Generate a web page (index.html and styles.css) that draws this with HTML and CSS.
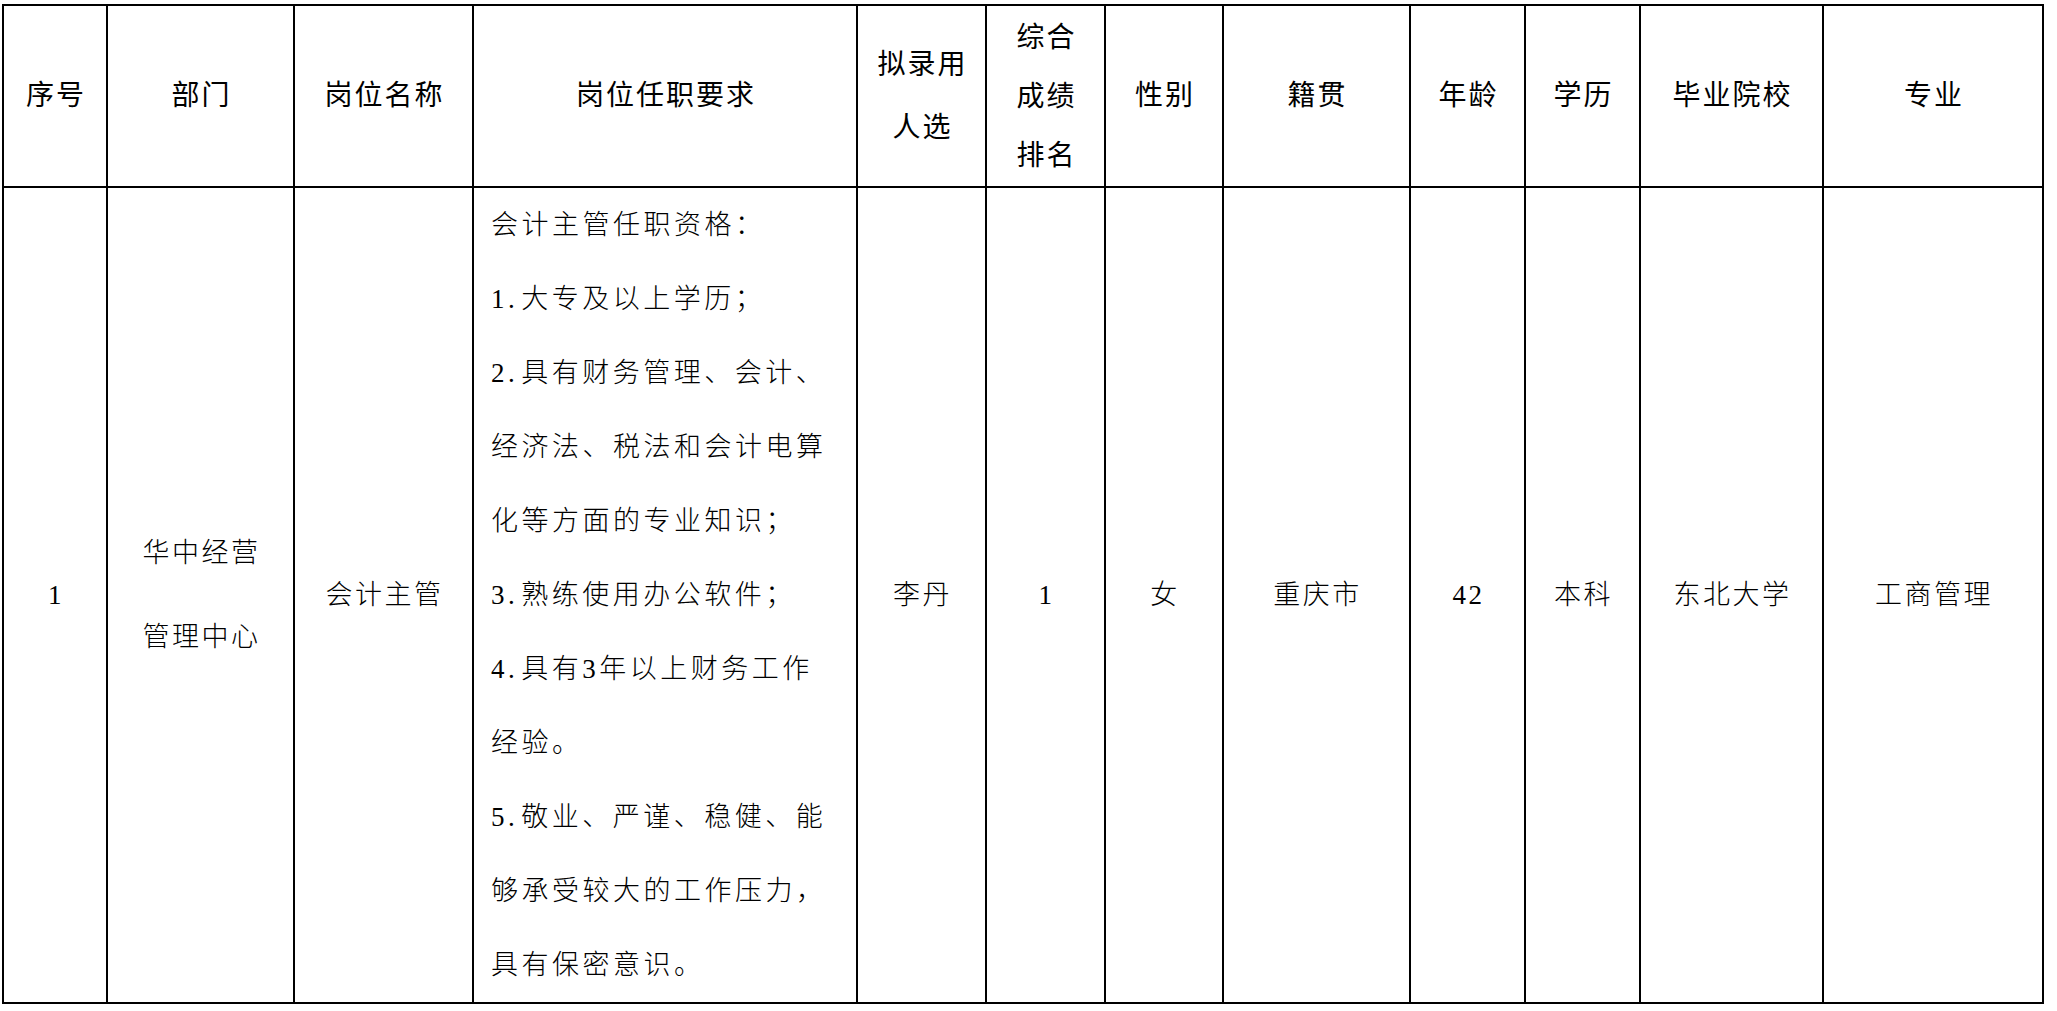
FILE: index.html
```html
<!DOCTYPE html>
<html lang="zh-CN">
<head>
<meta charset="utf-8">
<title>拟录用人选公示</title>
<link rel="stylesheet" href="styles.css">
</head>
<body>
<table class="grid">
  <colgroup>
    <col class="c-no">
    <col class="c-dept">
    <col class="c-title">
    <col class="c-req">
    <col class="c-pick">
    <col class="c-rank">
    <col class="c-sex">
    <col class="c-origin">
    <col class="c-age">
    <col class="c-edu">
    <col class="c-school">
    <col class="c-major">
  </colgroup>
  <thead>
    <tr class="head">
      <th>序号</th>
      <th>部门</th>
      <th>岗位名称</th>
      <th>岗位任职要求</th>
      <th class="two"><div>拟录用</div><div>人选</div></th>
      <th class="three"><div>综合</div><div>成绩</div><div>排名</div></th>
      <th>性别</th>
      <th>籍贯</th>
      <th>年龄</th>
      <th>学历</th>
      <th>毕业院校</th>
      <th>专业</th>
    </tr>
  </thead>
  <tbody>
    <tr class="row">
      <td>1</td>
      <td class="dept"><div>华中经营</div><div>管理中心</div></td>
      <td>会计主管</td>
      <td class="req">
        <div>会计主管任职资格：</div>
        <div><span class="num">1.</span>大专及以上学历；</div>
        <div><span class="num">2.</span>具有财务管理、会计、</div>
        <div>经济法、税法和会计电算</div>
        <div>化等方面的专业知识；</div>
        <div><span class="num">3.</span>熟练使用办公软件；</div>
        <div><span class="num">4.</span>具有3年以上财务工作</div>
        <div>经验。</div>
        <div><span class="num">5.</span>敬业、严谨、稳健、能</div>
        <div>够承受较大的工作压力，</div>
        <div>具有保密意识。</div>
      </td>
      <td>李丹</td>
      <td>1</td>
      <td>女</td>
      <td>重庆市</td>
      <td>42</td>
      <td>本科</td>
      <td>东北大学</td>
      <td>工商管理</td>
    </tr>
  </tbody>
</table>
</body>
</html>
```

FILE: styles.css
```css
html, body {
  margin: 0;
  padding: 0;
  background: #ffffff;
}

body {
  font-family: "Liberation Serif", "Noto Sans CJK SC", serif;
  color: #000000;
}

.grid {
  border-collapse: collapse;
  table-layout: fixed;
  width: 2042px;
  margin: 4px 0 0 2px;
}

.grid th,
.grid td {
  border: 2px solid #000000;
  padding: 0;
  text-align: center;
  vertical-align: middle;
}

.c-no { width: 104px; }
.c-dept { width: 187px; }
.c-title { width: 179px; }
.c-req { width: 384px; }
.c-pick { width: 129px; }
.c-rank { width: 119px; }
.c-sex { width: 118px; }
.c-origin { width: 187px; }
.c-age { width: 115px; }
.c-edu { width: 115px; }
.c-school { width: 183px; }
.c-major { width: 220px; }

.head {
  height: 182px;
}

.head th {
  font-size: 28px;
  font-weight: 400;
  letter-spacing: 2px;
  padding-left: 2px;
  line-height: 40px;
}

.head th.two {
  line-height: 63px;
}

.head th.three {
  line-height: 59px;
}

.row {
  height: 814px;
}

.row td {
  font-size: 27px;
  font-weight: 300;
  letter-spacing: 2.5px;
  padding-left: 2px;
  line-height: 40px;
}

.row td.dept {
  line-height: 84px;
}

.row td.req {
  text-align: left;
  line-height: 74px;
  letter-spacing: 3.5px;
  padding-left: 17px;
  white-space: nowrap;
}

.row td.req .num {
  margin-right: 3px;
}
```
